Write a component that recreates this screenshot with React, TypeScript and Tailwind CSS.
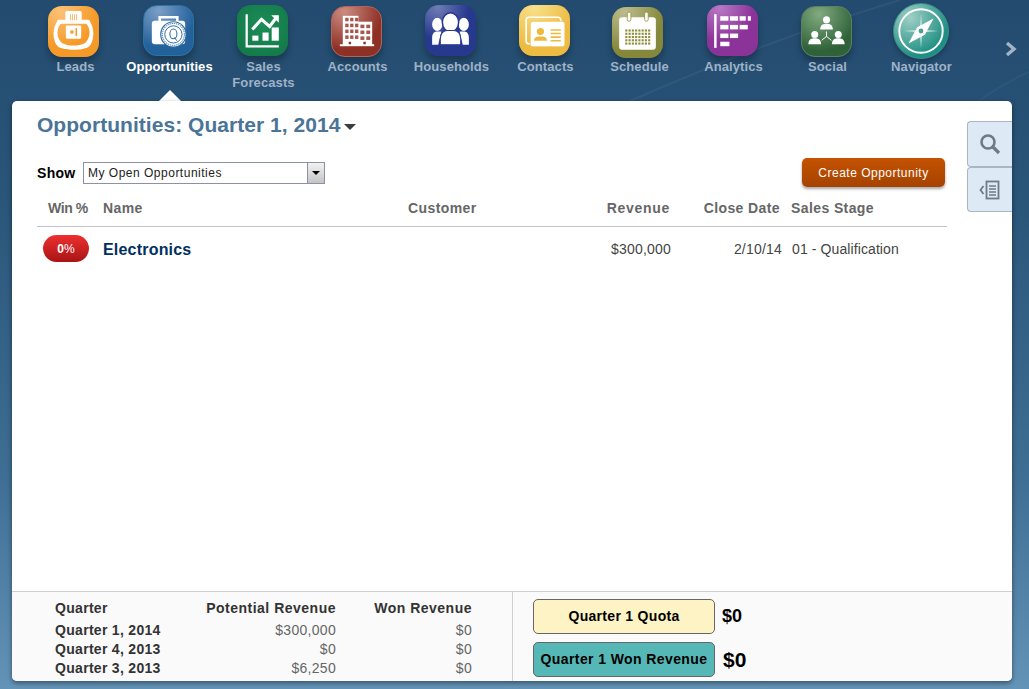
import type { ReactNode } from 'react'

const W = '#ffffff'

function LeadsIcon() {
  return (
    <svg viewBox="0 0 50 50" className="w-full h-full">
      <path fillRule="evenodd" fill={W} d="M10 14 C4 20 4 35 10 40 C16 44 34 44 40 40 C46 35 46 20 40 14 Z M12.5 17.5 C8 22 8 32 14 36.5 C20 39.5 30 39.5 36 36.5 C42 32 42 22 37.5 17.5 Z" />
      <rect x="9" y="13.5" width="32" height="3" rx="1.5" fill={W} />
      <rect x="17" y="5" width="16" height="11" rx="1.5" fill={W} />
      <path d="M22 8v6M24 8v6M26 8v6M28 8v6" stroke="#f5a030" strokeWidth="0.7" />
      <rect x="17.5" y="19" width="15" height="13" rx="1" fill={W} />
      <rect x="22" y="24" width="3" height="3" fill="#f39a24" />
      <rect x="27" y="21.5" width="1.5" height="8" fill="#f39a24" />
    </svg>
  )
}

function OpportunitiesIcon() {
  return (
    <svg viewBox="0 0 50 50" className="w-full h-full">
      <path d="M16 16 V11.5 H34 V16" fill="none" stroke={W} strokeWidth="2.6" />
      <rect x="8" y="15" width="34" height="24" rx="3" fill={W} />
      <circle cx="30" cy="29" r="13.5" fill="#2f6ba5" />
      <circle cx="30" cy="29" r="12.3" fill={W} />
      <circle cx="30" cy="29" r="11.2" fill="none" stroke="#2f6ba5" strokeWidth="1" strokeDasharray="1.4 0.8" />
      <circle cx="30" cy="29" r="8.8" fill="none" stroke="#2f6ba5" strokeWidth="1" />
      <ellipse cx="30" cy="28.5" rx="3.6" ry="5" fill="none" stroke="#2f6ba5" strokeWidth="1.1" />
      <path d="M31 32 L33.5 35.5" stroke="#2f6ba5" strokeWidth="1" />
    </svg>
  )
}

function ForecastIcon() {
  return (
    <svg viewBox="0 0 50 50" className="w-full h-full">
      <path d="M9.5 9 V40.5 H41" fill="none" stroke={W} strokeWidth="2.2" />
      <path d="M15 24 L24 14 L32 21 L39.5 11" fill="none" stroke={W} strokeWidth="3" />
      <path d="M33.5 10 H41 V17.5 Z" fill={W} />
      <rect x="15" y="30" width="6" height="5" fill={W} />
      <rect x="25" y="27" width="6" height="8" fill={W} />
      <rect x="34" y="22" width="7" height="13" fill={W} />
    </svg>
  )
}

function AccountsIcon() {
  const cells: ReactNode[] = []
  for (let r = 0; r < 4; r++) {
    for (let c = 0; c < 3; c++) {
      cells.push(<rect key={`a${r}${c}`} x={13.5 + c * 5} y={11 + r * 6} width="3.4" height="3.6" fill="#a8574c" />)
    }
  }
  for (let r = 0; r < 3; r++) {
    for (let c = 0; c < 2; c++) {
      cells.push(<rect key={`b${r}${c}`} x={29 + c * 6} y={18 + r * 6} width="4" height="3.6" fill="#a8574c" />)
    }
  }
  return (
    <svg viewBox="0 0 50 50" className="w-full h-full">
      <rect x="11" y="9" width="16" height="30" fill={W} />
      <rect x="26" y="15" width="15" height="24" fill={W} />
      <rect x="8" y="38" width="35" height="2" fill={W} />
      {cells}
      <rect x="17" y="35.5" width="2.5" height="2.5" fill="#8a3328" />
      <rect x="32" y="35.5" width="2.5" height="2.5" fill="#8a3328" />
    </svg>
  )
}

function HouseholdsIcon() {
  return (
    <svg viewBox="0 0 50 50" className="w-full h-full">
      <ellipse cx="12" cy="19" rx="5" ry="6.5" fill={W} />
      <path d="M7 39 V32 C7 28 9 26 12 26 L16 26 L13 39 Z" fill={W} />
      <ellipse cx="38" cy="19" rx="5" ry="6.5" fill={W} />
      <path d="M43 39 V32 C43 28 41 26 38 26 L34 26 L37 39 Z" fill={W} />
      <ellipse cx="25" cy="17" rx="8" ry="9.5" fill={W} stroke="#27388f" strokeWidth="1.5" />
      <path d="M15 39 V33 C15 28 18 25 22 25 H28 C32 25 35 28 35 33 V39 Z" fill={W} stroke="#27388f" strokeWidth="1" />
    </svg>
  )
}

function ContactsIcon() {
  return (
    <svg viewBox="0 0 50 50" className="w-full h-full">
      <rect x="7" y="12" width="34" height="26" rx="3" fill="none" stroke={W} strokeWidth="1.6" />
      <rect x="11" y="16" width="34" height="25" rx="2.5" fill={W} stroke="#efc24d" strokeWidth="0.8" />
      <circle cx="21" cy="26" r="3.5" fill="#efb93f" />
      <path d="M14.5 35 C15 31 18 31 21 31 C24 31 27 31 27.5 35 Z" fill="#efb93f" />
      <path d="M31 24.5 H41 M31 28 H41 M31 31.5 H41 M31 35 H41" stroke="#efb93f" strokeWidth="1.5" />
    </svg>
  )
}

function ScheduleIcon() {
  const dots: ReactNode[] = []
  for (let r = 0; r < 5; r++) {
    for (let c = 0; c < 8; c++) {
      dots.push(<rect key={`${r}${c}`} x={13 + c * 3.2} y={22 + r * 3.2} width="2.1" height="2.1" fill="#8f8f3d" />)
    }
  }
  return (
    <svg viewBox="0 0 50 50" className="w-full h-full">
      <rect x="7" y="10" width="36" height="32" rx="3" fill={W} />
      <rect x="15" y="5" width="3.5" height="9" rx="1.7" fill={W} stroke="#8f8f3d" strokeWidth="0.8" />
      <rect x="32" y="5" width="3.5" height="9" rx="1.7" fill={W} stroke="#8f8f3d" strokeWidth="0.8" />
      {dots}
    </svg>
  )
}

function AnalyticsIcon() {
  return (
    <svg viewBox="0 0 50 50" className="w-full h-full">
      <rect x="7" y="9" width="2.4" height="33" fill={W} />
      <rect x="13" y="11" width="8" height="4.4" fill={W} />
      <rect x="22.5" y="11" width="8" height="4.4" fill={W} />
      <rect x="32" y="11" width="6" height="4.4" fill={W} />
      <rect x="40" y="11" width="3" height="4.4" fill={W} />
      <rect x="13" y="19.5" width="8" height="4.4" fill={W} />
      <rect x="22.5" y="19.5" width="8" height="4.4" fill={W} />
      <rect x="32" y="19.5" width="8" height="4.4" fill={W} />
      <rect x="13" y="28" width="8" height="4.4" fill={W} />
      <rect x="22.5" y="28" width="8" height="4.4" fill={W} />
      <rect x="13" y="36" width="9" height="4.4" fill={W} />
    </svg>
  )
}

function Person({ x, y }: { x: number; y: number }) {
  return (
    <g>
      <circle cx={x} cy={y} r="3.6" fill={W} />
      <path d={`M${x - 6.5} ${y + 10} C${x - 6.5} ${y + 5} ${x - 3} ${y + 4} ${x} ${y + 4} C${x + 3} ${y + 4} ${x + 6.5} ${y + 5} ${x + 6.5} ${y + 10} Z`} fill={W} />
    </g>
  )
}

function SocialIcon() {
  return (
    <svg viewBox="0 0 50 50" className="w-full h-full">
      <Person x={25} y={13} />
      <Person x={13} y={28} />
      <Person x={37} y={28} />
      <path d="M25 25 V30 M25 30 L20 34 M25 30 L30 34" stroke={W} strokeWidth="1" fill="none" />
    </svg>
  )
}

function NavigatorIcon() {
  return (
    <svg viewBox="0 0 56 56" className="w-full h-full">
      <circle cx="28" cy="28" r="22.5" fill="none" stroke={W} strokeWidth="2" />
      <path d="M28 10 L29 24 L28 28 L27 24 Z M28 46 L29 32 L28 28 L27 32 Z M10 28 L24 27 L28 28 L24 29 Z M46 28 L32 27 L28 28 L32 29 Z" fill="#cfe8e4" />
      <path d="M41 15 L32 32 L24 24 Z" fill={W} />
      <path d="M15 41 L24 24 L32 32 Z" fill={W} />
      <circle cx="28" cy="28" r="2.5" fill="#4f9f98" />
    </svg>
  )
}

const navItems = [
  { label: 'Leads', tile: '-ml-[2px] mt-[1px] rounded-[14px] bg-[radial-gradient(circle_at_25%_10%,#fbc277,#f59a28_60%)]', icon: <LeadsIcon /> },
  { label: 'Opportunities', active: true, tile: 'rounded-[14px] border border-[#2a74a5] bg-[radial-gradient(circle_at_30%_10%,#7b9ec6,#23619b_65%)]', icon: <OpportunitiesIcon /> },
  { label: 'Sales Forecasts', tile: 'ml-[1px] rounded-[14px] bg-[radial-gradient(circle_at_50%_40%,#1b8d57,#147a4a_80%)]', icon: <ForecastIcon /> },
  { label: 'Accounts', tile: 'mt-[1px] rounded-[14px] border border-[#b0655c] bg-[radial-gradient(circle_at_25%_10%,#cc8c82,#8f3025_65%)]', icon: <AccountsIcon /> },
  { label: 'Households', tile: 'rounded-[14px] bg-[radial-gradient(circle_at_25%_5%,#6f7cb4,#27388f_50%)]', icon: <HouseholdsIcon /> },
  { label: 'Contacts', tile: 'rounded-[14px] bg-[radial-gradient(circle_at_30%_5%,#f8e08a,#edbb42_65%)]', icon: <ContactsIcon /> },
  { label: 'Schedule', tile: '-ml-[2px] mt-[2px] rounded-[14px] bg-[radial-gradient(circle_at_25%_10%,#bcbc8c,#85873a_65%)]', icon: <ScheduleIcon /> },
  { label: 'Analytics', tile: 'rounded-[14px] bg-[radial-gradient(circle_at_25%_5%,#b878c4,#8c3399_55%)]', icon: <AnalyticsIcon /> },
  { label: 'Social', tile: 'mt-[1px] rounded-[14px] border border-[#5f8060] bg-[radial-gradient(circle_at_35%_15%,#82aa80,#2f6238_70%)]', icon: <SocialIcon /> },
]

function NavTile({ item }: { item: (typeof navItems)[number] }) {
  return (
    <div className="w-[94px] flex flex-col items-center text-center">
      <div className="h-[54px]">
        <div className={`w-[51px] h-[51px] overflow-hidden shadow-[0_5px_6px_rgba(0,0,0,0.28)] ${item.tile}`}>{item.icon}</div>
      </div>
      <div className={`ml-[3px] text-[13px] leading-[16px] font-bold tracking-[0.1px] w-[90px] ${item.active ? 'text-white' : 'text-[#9fb2c6]'}`}>
        {item.label}
      </div>
    </div>
  )
}

const footerRows = [
  ['Quarter 1, 2014', '$300,000', '$0'],
  ['Quarter 4, 2013', '$0', '$0'],
  ['Quarter 3, 2013', '$6,250', '$0'],
]

export default function App() {
  return (
    <div className="relative h-[689px] overflow-hidden font-['Liberation_Sans',Arial,sans-serif] bg-[linear-gradient(180deg,#234b6f_0%,#2a5679_30%,#3f6f94_70%,#6394b8_100%)]">
      <svg className="absolute left-0 top-0 w-[1029px] h-[110px]" viewBox="0 0 1029 110" fill="none">
        <path d="M630 101 C700 70 800 30 900 0" stroke="#ffffff" strokeOpacity="0.05" strokeWidth="2" />
        <path d="M980 100 C995 90 1010 80 1029 72" stroke="#ffffff" strokeOpacity="0.04" strokeWidth="2" />
      </svg>

      <div className="relative h-[101px] pt-[5px] pl-[27px] flex">
        {navItems.map((item) => (
          <NavTile key={item.label} item={item} />
        ))}
        <div className="w-[94px] flex flex-col items-center text-center">
          <div className="h-[54px] -mt-[2px] ml-[2px] flex justify-center items-start">
            <div className="w-[56px] h-[56px] rounded-full border border-[#3b8f8c] shadow-[0_3px_5px_rgba(0,0,0,0.25)] bg-[radial-gradient(circle_at_30%_25%,#9fcfc6,#1f8f83_70%)]">
              <NavigatorIcon />
            </div>
          </div>
          <div className="mt-[2px] ml-[3px] text-[13px] leading-[16px] font-bold tracking-[0.1px] text-[#9fb2c6]">Navigator</div>
        </div>
        <svg className="absolute left-[1004px] top-[41px] w-[14px] h-[16px]" viewBox="0 0 14 16" fill="none">
          <path d="M3 2 L10 8 L3 14" stroke="#a4b3c6" strokeWidth="3.4" />
        </svg>
        <div className="absolute left-[159px] bottom-0 w-0 h-0 border-x-[11px] border-b-[11px] border-x-transparent border-b-white" />
      </div>

      <div className="relative ml-[12px] mr-[17px] h-[580px] bg-white rounded-[5px] shadow-[0_2px_5px_rgba(0,0,0,0.45)] flex flex-col overflow-hidden">
        <div className="flex-1 pl-[25px] pr-[65px] pt-[10px]">
          <div className="flex items-center h-[28px]">
            <h1 className="text-[21px] tracking-[0.04px] leading-[28px] font-bold text-[#4a7598]">Opportunities: Quarter 1, 2014</h1>
            <div className="ml-[4px] mt-[3px] w-0 h-0 border-x-[6px] border-t-[6px] border-x-transparent border-t-[#3c3c3c]" />
          </div>

          <div className="mt-[22px] flex items-start">
            <div className="flex items-center mt-[1px]">
              <span className="w-[46px] text-[14px] font-bold tracking-[0.3px] text-black">Show</span>
              <div className="w-[242px] h-[22px] border border-[#8c92a6] flex items-center justify-between">
                <span className="pl-[4px] text-[12px] tracking-[0.5px] text-[#222]">My Open Opportunities</span>
                <div className="w-[17px] h-[20px] border-l border-[#8c92a6] bg-[linear-gradient(180deg,#f2f2f2,#c4c4c4)] flex items-center justify-center">
                  <div className="w-0 h-0 border-x-[4px] border-t-[4px] border-x-transparent border-t-black" />
                </div>
              </div>
            </div>
            <button className="ml-auto -mt-[3px] mr-[2px] w-[143px] h-[29px] rounded-[5px] bg-[linear-gradient(180deg,#c45200,#a54300)] text-white text-[12px] tracking-[0.5px] shadow-[0_2px_3px_rgba(0,0,0,0.35)]">
              Create Opportunity
            </button>
          </div>

          <div className="mt-[4px] h-[36px] flex items-center border-b border-[#c4c4c4] text-[14px] font-bold tracking-[0.4px] text-[#666]">
            <div className="w-[66px] pl-[11px] tracking-[-0.4px]">Win %</div>
            <div className="w-[305px]">Name</div>
            <div className="w-[262px] flex justify-between">
              <span>Customer</span>
              <span className="tracking-[0.7px]">Revenue</span>
            </div>
            <div className="w-[110px] text-right">Close Date</div>
            <div className="pl-[11px]">Sales Stage</div>
          </div>

          <div className="h-[45px] flex items-center text-[14px] tracking-[0.2px] text-[#444]">
            <div className="w-[66px] pl-[6px] pb-[2px]">
              <div className="w-[46px] h-[27px] rounded-full bg-[linear-gradient(180deg,#ee3030,#a91414)] text-white text-[12px] font-bold flex items-center justify-center">
                0<span className="font-normal">%</span>
              </div>
            </div>
            <div className="w-[305px] text-[16px] font-bold text-[#00305f]">Electronics</div>
            <div className="w-[263px] text-right">$300,000</div>
            <div className="w-[111px] text-right">2/10/14</div>
            <div className="pl-[10px] tracking-[0.1px]">01 - Qualification</div>
          </div>
        </div>

        <div className="h-[90px] bg-[#fafafa] border-t border-[#cfcfcf] flex">
          <div className="w-[501px] border-r border-[#cfcfcf] pl-[43px] pt-[7px]">
            <div className="grid grid-cols-[135px_146px_136px] text-[14px] leading-[19px] tracking-[0.3px] text-[#333]">
              <div className="font-bold h-[22px]">Quarter</div>
              <div className="font-bold text-right tracking-[0.5px]">Potential Revenue</div>
              <div className="font-bold text-right tracking-[0.5px]">Won Revenue</div>
              {footerRows.map((row) => (
                <div key={row[0]} className="contents">
                  <div className="font-bold">{row[0]}</div>
                  <div className="text-right text-[#666]">{row[1]}</div>
                  <div className="text-right text-[#666]">{row[2]}</div>
                </div>
              ))}
            </div>
          </div>
          <div className="pl-[20px] pt-[7px] flex flex-col gap-[8px]">
            <div className="flex items-center">
              <div className="w-[182px] h-[35px] rounded-[5px] border border-[#666] bg-[#fdf3c5] text-[14px] font-bold tracking-[0.3px] text-black flex items-center justify-center">
                Quarter 1 Quota
              </div>
              <span className="ml-[7px] text-[18px] font-bold text-black">$0</span>
            </div>
            <div className="flex items-center">
              <div className="w-[182px] h-[35px] rounded-[5px] border border-[#666] bg-[#56b8b6] text-[14px] font-bold tracking-[0.4px] text-black flex items-center justify-center">
                Quarter 1 Won Revenue
              </div>
              <span className="ml-[8px] text-[21px] font-bold text-black">$0</span>
            </div>
          </div>
        </div>

        <div className="absolute right-0 top-[20px] flex flex-col">
          <div className="w-[45px] h-[46px] bg-[#ddeaf6] border border-r-0 border-[#a9b6c3] rounded-l-[4px] flex items-center justify-center">
            <svg viewBox="0 0 22 22" className="w-[22px] h-[22px]" fill="none" stroke="#6f7a84">
              <circle cx="9" cy="9" r="6.5" strokeWidth="2.6" />
              <path d="M13.5 13.5 L20 20" strokeWidth="3.2" />
            </svg>
          </div>
          <div className="w-[45px] h-[45px] bg-[#ddeaf6] border border-r-0 border-[#a9b6c3] rounded-l-[4px] flex items-center justify-center">
            <svg viewBox="0 0 22 22" className="w-[22px] h-[22px]" fill="none" stroke="#6f7a84">
              <path d="M4.5 7 L1.5 11 L4.5 15" strokeWidth="1.8" />
              <rect x="7.5" y="2.5" width="12" height="17" strokeWidth="1.8" />
              <path d="M10 7 H17 M10 10 H17 M10 13 H17 M10 16 H17" strokeWidth="1.4" />
            </svg>
          </div>
        </div>
      </div>
    </div>
  )
}
